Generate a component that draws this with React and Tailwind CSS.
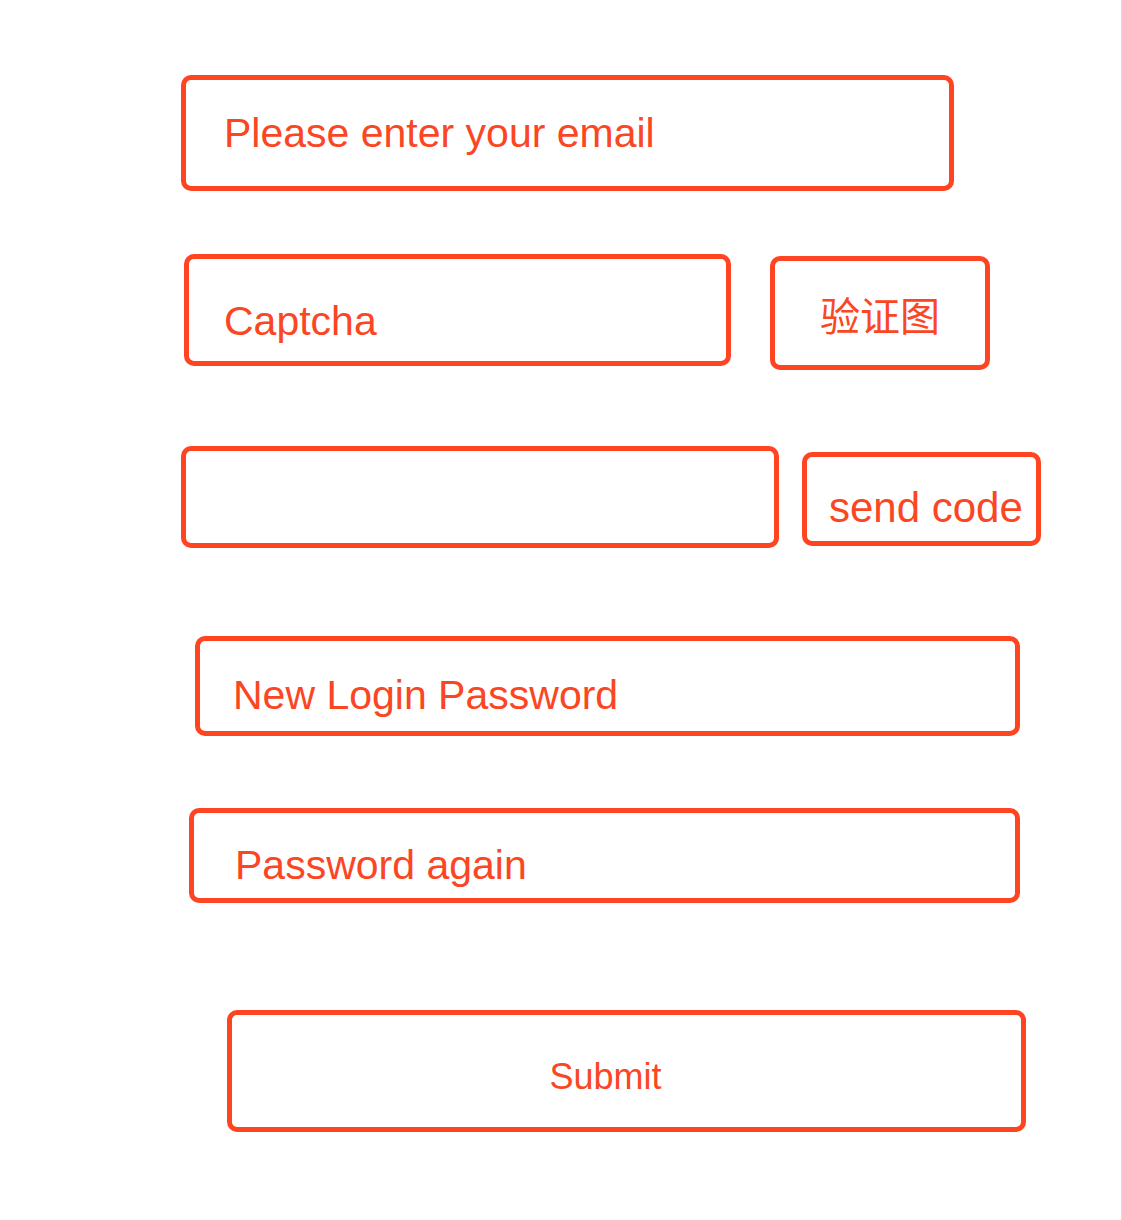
import React from "react";

const font = { fontFamily: '"Liberation Sans", "Noto Sans CJK SC", sans-serif' };

export default function App() {
  return (
    <div
      className="w-[1122px] h-[1220px] bg-white border-r border-[#dcdcdc] flex flex-col text-[#fb4623]"
      style={font}
    >
      {/* Email */}
      <div className="mt-[75px] ml-[181px] w-[773px] h-[116px] border-[5px] border-[#ff4422] rounded-[10px] flex items-center pl-[38px] text-[41px] leading-none">
        Please enter your email
      </div>

      {/* Captcha row */}
      <div className="mt-[63px] flex items-start">
        <div className="ml-[184px] w-[547px] h-[112px] border-[5px] border-[#ff4422] rounded-[10px] flex items-center pl-[35px] pt-[22px] text-[41px] leading-none">
          Captcha
        </div>
        <div className="ml-[39px] mt-[2px] w-[220px] h-[114px] border-[5px] border-[#ff4422] rounded-[10px] flex items-center justify-center pt-[7px] text-[40px] leading-none">
          验证图
        </div>
      </div>

      {/* Code row */}
      <div className="mt-[76px] flex items-start">
        <div className="ml-[181px] w-[598px] h-[102px] border-[5px] border-[#ff4422] rounded-[10px]" />
        <div className="ml-[23px] mt-[6px] w-[239px] h-[94px] border-[5px] border-[#ff4422] rounded-[10px] flex items-center pl-[22px] pt-[17px] text-[42px] leading-none">
          send code
        </div>
      </div>

      {/* New password */}
      <div className="mt-[88px] ml-[195px] w-[825px] h-[100px] border-[5px] border-[#ff4422] rounded-[10px] flex items-center pl-[33px] pt-[18px] text-[41px] leading-none">
        New Login Password
      </div>

      {/* Password again */}
      <div className="mt-[72px] ml-[189px] w-[831px] h-[95px] border-[5px] border-[#ff4422] rounded-[10px] flex items-center pl-[41px] pt-[19px] text-[41px] leading-none">
        Password again
      </div>

      {/* Submit */}
      <div className="mt-[107px] ml-[227px] w-[799px] h-[122px] border-[5px] border-[#ff4422] rounded-[10px] flex items-center justify-center pr-[42px] pt-[11px] text-[36px] leading-none">
        Submit
      </div>
    </div>
  );
}
